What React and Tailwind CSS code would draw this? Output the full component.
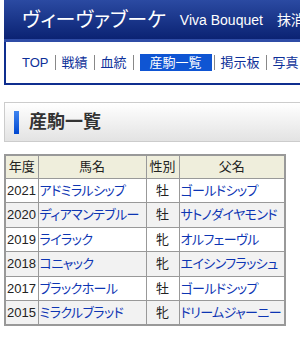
import React from "react";

const rows = [
  ["2021", "アドミラルシップ", "牡", "ゴールドシップ"],
  ["2020", "ディアマンテブルー", "牡", "サトノダイヤモンド"],
  ["2019", "ライラック", "牝", "オルフェーヴル"],
  ["2018", "コニャック", "牝", "エイシンフラッシュ"],
  ["2017", "ブラックホール", "牡", "ゴールドシップ"],
  ["2015", "ミラクルブラッド", "牝", "ドリームジャーニー"],
];

function Sep() {
  return <span className="mx-[6px] inline-block h-[15px] w-px bg-[#888]" />;
}

export default function App() {
  return (
    <div
      className="w-[300px] h-[340px] overflow-hidden bg-white [font-feature-settings:'palt']"
      style={{ fontFamily: '"Liberation Sans", "Noto Sans CJK JP", sans-serif' }}
    >
      <div className="ml-[4px] w-[360px]">
        <div className="flex h-[39px] items-center bg-gradient-to-b from-[#2b4aa2] to-[#0b2273] pl-[18px] text-white">
          <span className="text-[20px] leading-none">ヴィーヴァブーケ</span>
          <span className="ml-[14px] text-[14px] leading-none">Viva Bouquet</span>
          <span className="ml-[14px] text-[14px] leading-none">抹消</span>
        </div>
        <div className="h-[3px] bg-[#2f4ca6]" />
        <div className="flex h-[43px] items-center border-b-2 border-l-2 border-[#0f2e8f] pl-[16px] text-[13px] text-[#0d3099]">
          <span>TOP</span>
          <Sep />
          <span>戦績</span>
          <Sep />
          <span>血統</span>
          <Sep />
          <span className="flex h-[17px] w-[72px] items-center justify-center bg-[#0f55d3] text-white">産駒一覧</span>
          <span className="ml-[2px] mr-[6px] inline-block h-[15px] w-px bg-[#888]" />
          <span>掲示板</span>
          <Sep />
          <span>写真</span>
        </div>
      </div>

      <div className="ml-[4px] mt-[17px] flex h-[40px] w-[360px] items-center border border-[#cccccc] bg-gradient-to-b from-white to-[#e3e3e3]">
        <div className="ml-[9px] h-[23px] w-[5px] bg-gradient-to-b from-[#3d84f0] to-[#0046d0]" />
        <div className="ml-[10px] text-[18px] font-bold text-[#333]">産駒一覧</div>
      </div>

      <table className="ml-[4px] mt-[12px] w-[280px] table-fixed border-collapse border-2 border-[#999] text-[13px] text-[#222]">
        <colgroup>
          <col className="w-[33px]" />
          <col className="w-[108px]" />
          <col className="w-[33px]" />
          <col className="w-[106px]" />
        </colgroup>
        <thead>
          <tr className="h-[23px] bg-[#efeedc]">
            <th className="border border-[#999] p-0 text-center font-normal">年度</th>
            <th className="border border-[#999] p-0 text-center font-normal">馬名</th>
            <th className="border border-[#999] p-0 text-center font-normal">性別</th>
            <th className="border border-[#999] p-0 text-center font-normal">父名</th>
          </tr>
        </thead>
        <tbody>
          {rows.map((r, i) => (
            <tr key={r[0]} className={`h-[24.5px] ${i % 2 === 1 ? "bg-[#f2f2f2]" : "bg-white"}`}>
              <td className="border border-[#999] px-[1px] py-0 whitespace-nowrap">{r[0]}</td>
              <td className="border border-[#999] px-[1px] py-0 whitespace-nowrap overflow-hidden tracking-[-0.6px] text-[#0d35b3]">{r[1]}</td>
              <td className="border border-[#999] p-0 text-center">{r[2]}</td>
              <td className="border border-[#999] px-[1px] py-0 whitespace-nowrap overflow-hidden tracking-[-0.6px] text-[#0d35b3]">{r[3]}</td>
            </tr>
          ))}
        </tbody>
      </table>
    </div>
  );
}
